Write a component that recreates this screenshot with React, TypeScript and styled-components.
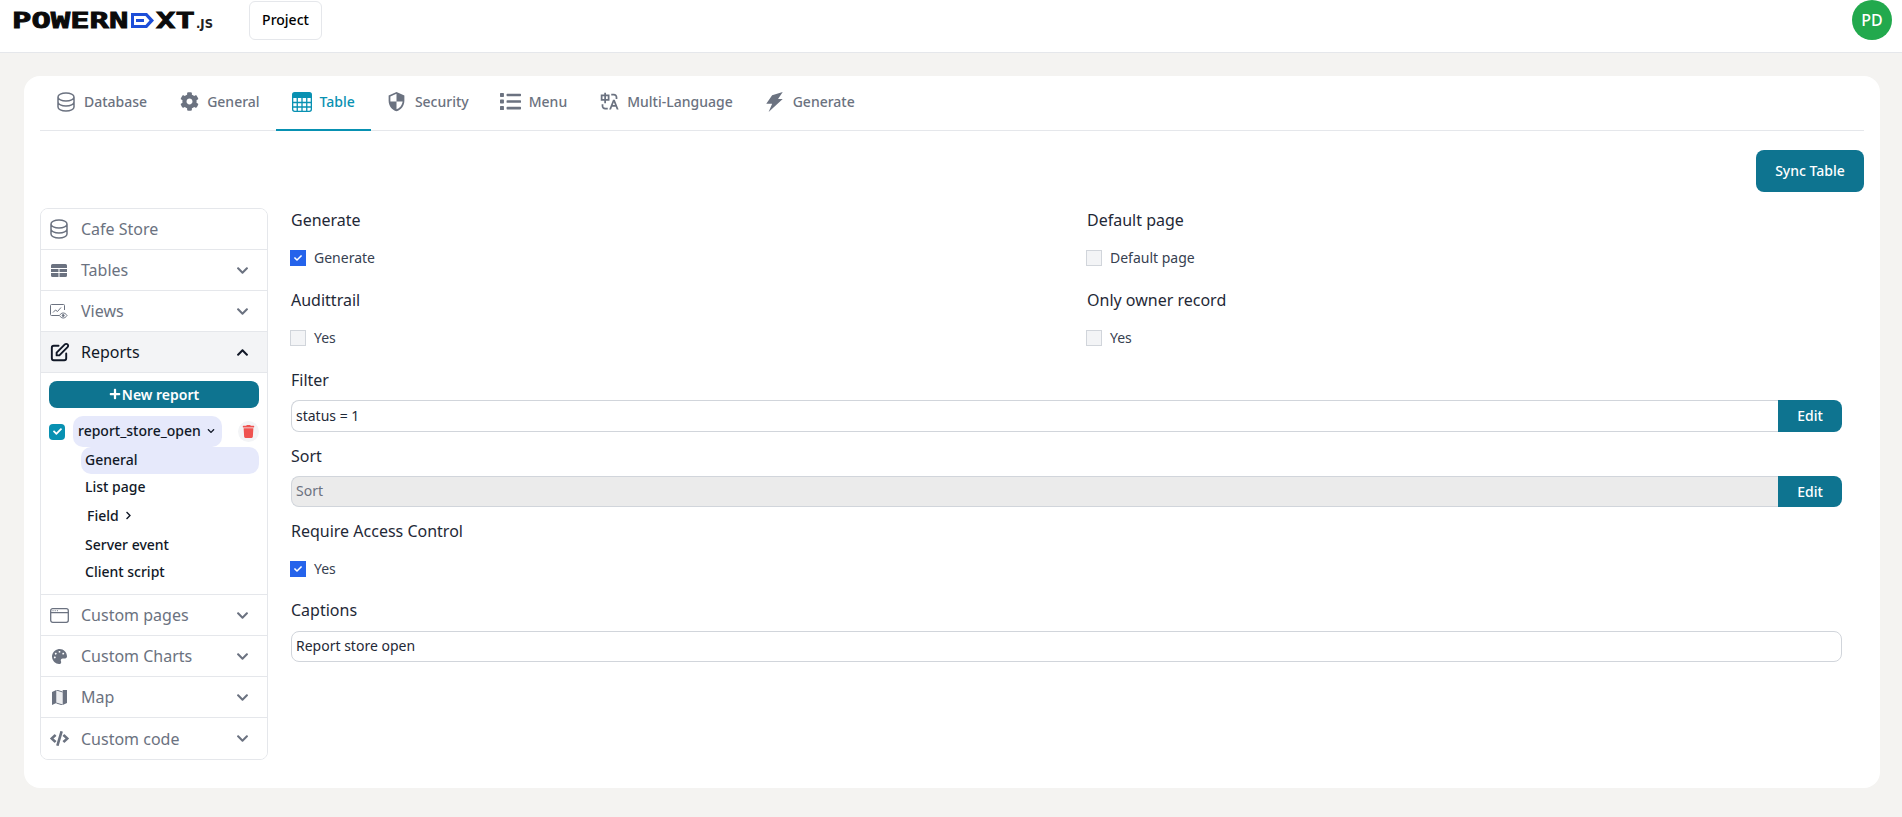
import React from 'react'
import styled, { createGlobalStyle } from 'styled-components'
import {
  FaCheck,
  FaChevronDown,
  FaChevronRight,
  FaChevronUp,
  FaCode,
  FaCog,
  FaList,
  FaPalette,
  FaPlus,
  FaTrash,
} from 'react-icons/fa'
import { HiOutlineDatabase, HiOutlinePencilAlt } from 'react-icons/hi'
import { MdSecurity } from 'react-icons/md'
import { RiTranslate } from 'react-icons/ri'

const GlobalStyle = createGlobalStyle`
  * { box-sizing: border-box; }
  html, body { margin: 0; padding: 0; }
  body {
    background: #f4f3f1;
    font-family: "Noto Sans", "Open Sans", sans-serif;
    color: #111827;
    min-height: 817px;
    overflow: hidden;
  }
`

// Header
const Header = styled.header`
  height: 53px;
  background: #fff;
  border-bottom: 1px solid #e5e7eb;
  display: flex;
  align-items: flex-start;
  padding: 1px 10px 0 12px;
`
const Logo = styled.div`
  width: 237px;
  height: 39px;
  display: flex;
  align-items: center;
  color: #0b0b0b;
  font-family: "DejaVu Sans Mono", monospace;
  font-weight: 700;
  font-size: 20.5px;
`
const LogoWord = styled.span<{ $width: number }>`
  display: inline-block;
  width: ${(p) => p.$width}px;
  transform: scaleX(1.57);
  transform-origin: left center;
  -webkit-text-stroke: 0.8px #0b0b0b;
`
const LogoSmall = styled.span`
  font-family: "DejaVu Sans", sans-serif;
  font-size: 11.5px;
  margin: 7px 0 0 1px;
  color: #222;
`
const ProjectButton = styled.button`
  width: 73px;
  height: 39px;
  padding: 0 0 2px;
  background: #fff;
  border: 1px solid #e5e7eb;
  border-radius: 6px;
  font: 500 14px "Noto Sans", sans-serif;
  color: #000;
`
const Avatar = styled.div`
  margin: -1px 0 0 auto;
  width: 40px;
  height: 40px;
  border-radius: 50%;
  background: #22a94d;
  color: #fff;
  font-size: 16px;
  font-weight: 500;
  display: flex;
  align-items: center;
  justify-content: center;
`

// Card and tabs
const Card = styled.main`
  margin: 23px 22px 0 24px;
  height: 712px;
  background: #fff;
  border-radius: 16px;
  padding: 0 16px;
`
const Tabs = styled.nav`
  height: 55px;
  display: flex;
  border-bottom: 1px solid #e5e7eb;
`
const Tab = styled.div<{ $active?: boolean }>`
  height: 55px;
  padding: 0 16px 2px;
  display: flex;
  align-items: center;
  gap: 8px;
  font-size: 14px;
  font-weight: 500;
  color: ${(p) => (p.$active ? '#0891b2' : '#6b7280')};
  border-bottom: 2px solid ${(p) => (p.$active ? '#0891b2' : 'transparent')};
`
const TabIcon = styled.span`
  width: 20px;
  height: 20px;
  display: flex;
  align-items: center;
  justify-content: center;
  & > svg {
    flex: none;
  }
`
const Toolbar = styled.div`
  display: flex;
  justify-content: flex-end;
  padding-top: 19px;
  height: 77px;
`
const SyncButton = styled.button`
  width: 108px;
  height: 42px;
  padding: 0 0 2px;
  border: 0;
  border-radius: 8px;
  background: #0e7490;
  color: #fff;
  font: 500 14px "Noto Sans", sans-serif;
`
const Body = styled.div`
  display: flex;
  align-items: flex-start;
  gap: 23px;
  padding-right: 22px;
`

// Sidebar
const Sidebar = styled.aside`
  width: 228px;
  flex: none;
  border: 1px solid #e5e7eb;
  border-radius: 8px;
  overflow: hidden;
`
const SideRow = styled.div<{ $open?: boolean; $last?: boolean }>`
  height: 41px;
  display: flex;
  align-items: center;
  padding: 0 18px 0 8px;
  font-size: 16px;
  color: ${(p) => (p.$open ? '#111827' : '#6b7280')};
  background: ${(p) => (p.$open ? '#f3f4f6' : '#fff')};
  border-bottom: ${(p) => (p.$last ? '0' : '1px solid #e5e7eb')};
`
const SideIcon = styled.span`
  width: 20px;
  height: 20px;
  display: flex;
  align-items: center;
  justify-content: center;
  margin-right: 12px;
  & > svg {
    flex: none;
  }
`
const SideLabel = styled.span`
  flex: 1;
`
const SidePanel = styled.div`
  height: 222px;
  padding: 8px 8px 0;
  border-bottom: 1px solid #e5e7eb;
`
const NewButton = styled.button`
  width: 100%;
  height: 27px;
  padding: 0 0 1px;
  border: 0;
  border-radius: 8px;
  background: #0e7490;
  color: #fff;
  font: 600 14px "Noto Sans", sans-serif;
  display: flex;
  align-items: center;
  justify-content: center;
  gap: 1px;
`
const ReportRow = styled.div`
  margin-top: 8px;
  height: 31px;
  display: flex;
  align-items: center;
`
const TealCheck = styled.span`
  width: 16px;
  height: 16px;
  border-radius: 4px;
  background: #0891b2;
  color: #fff;
  display: flex;
  align-items: center;
  justify-content: center;
  margin-right: 8px;
`
const ReportPill = styled.div`
  width: 149px;
  height: 31px;
  padding: 0 0 2px 5px;
  border-radius: 10px;
  background: #e6e9fb;
  display: flex;
  align-items: center;
  gap: 6px;
  font-size: 14px;
  font-weight: 500;
`
const TrashButton = styled.span`
  margin-left: auto;
  width: 21px;
  height: 21px;
  border-radius: 50%;
  background: #f3f4f6;
  color: #ef5350;
  display: flex;
  align-items: center;
  justify-content: center;
`
const SubItem = styled.div<{ $active?: boolean; $height: number; $indent?: number }>`
  margin-left: 32px;
  height: ${(p) => p.$height}px;
  padding: 0 0 2px ${(p) => p.$indent ?? 4}px;
  display: flex;
  align-items: center;
  gap: 5px;
  font-size: 14px;
  font-weight: 500;
  border-radius: 10px;
  background: ${(p) => (p.$active ? '#e6e9fb' : 'transparent')};
`

// Form
const Form = styled.section`
  flex: 1;
  min-width: 0;
`
const TwoCols = styled.div`
  display: grid;
  grid-template-columns: 796px 1fr;
  row-gap: 1px;
  margin-bottom: 1px;
`
const Label = styled.div<{ $top?: number }>`
  height: 24px;
  line-height: 24px;
  margin-top: ${(p) => p.$top ?? 0}px;
  font-size: 16px;
  color: #1f2937;
`
const CheckRow = styled.label`
  height: 24px;
  margin: 14px 0 17px;
  padding-bottom: 1px;
  display: flex;
  align-items: center;
  gap: 8px;
  font-size: 14px;
  color: #374151;
`
const Box = styled.span<{ $checked?: boolean }>`
  width: 16px;
  height: 16px;
  flex: none;
  margin-left: -1px;
  background: ${(p) => (p.$checked ? '#2563eb' : '#f3f4f6')};
  border: 1px solid ${(p) => (p.$checked ? '#2563eb' : '#d1d5db')};
  color: #fff;
  display: flex;
  align-items: center;
  justify-content: center;
`
const InputRow = styled.div<{ $height: number; $top?: number }>`
  margin: ${(p) => p.$top ?? 8}px 0 12px;
  display: flex;
  height: ${(p) => p.$height}px;
`
const TextInput = styled.input<{ $full?: boolean }>`
  flex: 1;
  min-width: 0;
  height: 100%;
  border: 1px solid #d1d5db;
  border-right: ${(p) => (p.$full ? '1px solid #d1d5db' : '0')};
  border-radius: ${(p) => (p.$full ? '8px' : '8px 0 0 8px')};
  padding: 0 4px 2px;
  font: 400 14px "Noto Sans", sans-serif;
  color: #1f2937;
  background: #fff;
  &:disabled {
    background: #ebebeb;
  }
  &::placeholder {
    color: #6b7280;
  }
`
const EditButton = styled.button`
  width: 64px;
  height: 100%;
  padding: 0 0 1px;
  border: 0;
  border-radius: 0 8px 8px 0;
  background: #0e7490;
  color: #fff;
  font: 500 14px "Noto Sans", sans-serif;
`

// Icons that the packages don't have
const TableGridIcon = () => (
  <svg width="20" height="20" viewBox="0 0 20 20" fill="none" stroke="currentColor" strokeWidth="1.300">
    <rect x="0.650" y="0.650" width="18.700" height="18.700" rx="2" />
    <path d="M1 3.500h18" strokeWidth="5" />
    <path d="M5.250 6v13M10 6v13M14.750 6v13M1 10.500h18M1 15h18" />
  </svg>
)
const BoltIcon = () => (
  <svg width="17" height="20" viewBox="0 0 14 17" fill="currentColor">
    <path d="M5 2.700L14 0l-4 6h4L2 17l3-7H0z" />
  </svg>
)
const TablesIcon = () => (
  <svg width="16" height="13" viewBox="0 0 16 13" fill="currentColor">
    <path d="M1.500 0h13A1.500 1.500 0 0 1 16 1.500V4H0V1.500A1.500 1.500 0 0 1 1.500 0zM0 5h7.500v3H0zM8.500 5H16v3H8.500zM0 9h7.500v4H1.500A1.500 1.500 0 0 1 0 11.500zM8.500 9H16v2.500a1.500 1.500 0 0 1-1.500 1.500h-6z" />
  </svg>
)
const ViewsIcon = () => (
  <svg width="18" height="15" viewBox="0 0 18 15" fill="none" stroke="currentColor" strokeWidth="1">
    <path d="M9 11.500H1.500a1 1 0 0 1-1-1v-9a1 1 0 0 1 1-1h12a1 1 0 0 1 1 1V6" />
    <path d="M3 8.500l2.500-2.500 2 1.500L11 3.500" />
    <path d="M9.500 11.500c1-1.700 2.300-2.500 3.700-2.500s2.800.8 3.800 2.500c-1 1.700-2.400 2.500-3.800 2.500s-2.700-.8-3.700-2.500z" />
    <circle cx="13.200" cy="11.500" r="1" fill="currentColor" />
  </svg>
)
const WindowIcon = () => (
  <svg width="19" height="15" viewBox="0 0 19 15" fill="none" stroke="currentColor" strokeWidth="1.300">
    <rect x="0.700" y="0.700" width="17.600" height="13.600" rx="2" />
    <path d="M0.700 4.700h17.600" />
    <path d="M2.500 2.700h1M4.700 2.700h1M6.900 2.700h1" strokeWidth="1" />
  </svg>
)
const MapIcon = () => (
  <svg width="15" height="15" viewBox="0 0 15 15" fill="currentColor">
    <path d="M0 2l4.300-2v13L0 15zM10.700 0L15 0v13l-4.300 2z" />
    <path d="M4.300 0l6.400 2v13l-6.400-2z" fillOpacity="0.12" />
    <path d="M4.300 0l6.400 2M4.300 13l6.400 2" stroke="currentColor" strokeWidth="1" />
  </svg>
)
const LogoArrow = () => (
  <svg width="25" height="15" viewBox="0 0 25 15" fill="#1d4ed8">
    <path d="M0 0h16l7 7.500-7 7.500H0zM3 3v9h11.500l4-4.500-4-4.500z" fillRule="evenodd" />
    <rect x="5" y="6" width="8" height="3" />
  </svg>
)

const tabs = [
  { label: 'Database', icon: <HiOutlineDatabase size={24} strokeWidth={1.5} /> },
  { label: 'General', icon: <FaCog size={19} /> },
  { label: 'Table', icon: <TableGridIcon />, active: true },
  { label: 'Security', icon: <MdSecurity size={21} /> },
  { label: 'Menu', icon: <FaList size={21} /> },
  { label: 'Multi-Language', icon: <RiTranslate size={21} /> },
  { label: 'Generate', icon: <BoltIcon /> },
]

const subItems = [
  { label: 'List page', height: 26 },
  { label: 'Field', height: 32, indent: 6, more: true },
  { label: 'Server event', height: 27 },
  { label: 'Client script', height: 27 },
]

const Chevron = () => <FaChevronDown size={13} />

export default function App() {
  return (
    <>
      <GlobalStyle />
      <Header>
        <Logo>
          <LogoWord $width={119}>POWERN</LogoWord>
          <LogoArrow />
          <LogoWord $width={39}>XT</LogoWord>
          <LogoSmall>.JS</LogoSmall>
        </Logo>
        <ProjectButton>Project</ProjectButton>
        <Avatar>PD</Avatar>
      </Header>
      <Card>
        <Tabs>
          {tabs.map((t) => (
            <Tab key={t.label} $active={t.active}>
              <TabIcon>{t.icon}</TabIcon>
              {t.label}
            </Tab>
          ))}
        </Tabs>
        <Toolbar>
          <SyncButton>Sync Table</SyncButton>
        </Toolbar>
        <Body>
          <Sidebar>
            <SideRow>
              <SideIcon><HiOutlineDatabase size={24} strokeWidth={1.5} /></SideIcon>
              <SideLabel>Cafe Store</SideLabel>
            </SideRow>
            <SideRow>
              <SideIcon><TablesIcon /></SideIcon>
              <SideLabel>Tables</SideLabel>
              <Chevron />
            </SideRow>
            <SideRow>
              <SideIcon><ViewsIcon /></SideIcon>
              <SideLabel>Views</SideLabel>
              <Chevron />
            </SideRow>
            <SideRow $open>
              <SideIcon><HiOutlinePencilAlt size={23} /></SideIcon>
              <SideLabel>Reports</SideLabel>
              <FaChevronUp size={13} />
            </SideRow>
            <SidePanel>
              <NewButton><FaPlus size={12} />New report</NewButton>
              <ReportRow>
                <TealCheck><FaCheck size={9} /></TealCheck>
                <ReportPill>
                  report_store_open
                  <FaChevronDown size={8} />
                </ReportPill>
                <TrashButton><FaTrash size={13} /></TrashButton>
              </ReportRow>
              <SubItem $active $height={27}>General</SubItem>
              {subItems.map((s) => (
                <SubItem key={s.label} $height={s.height} $indent={s.indent}>
                  {s.label}
                  {s.more && <FaChevronRight size={9} />}
                </SubItem>
              ))}
            </SidePanel>
            <SideRow>
              <SideIcon><WindowIcon /></SideIcon>
              <SideLabel>Custom pages</SideLabel>
              <Chevron />
            </SideRow>
            <SideRow>
              <SideIcon><FaPalette size={15} /></SideIcon>
              <SideLabel>Custom Charts</SideLabel>
              <Chevron />
            </SideRow>
            <SideRow>
              <SideIcon><MapIcon /></SideIcon>
              <SideLabel>Map</SideLabel>
              <Chevron />
            </SideRow>
            <SideRow $last>
              <SideIcon><FaCode size={19} /></SideIcon>
              <SideLabel>Custom code</SideLabel>
              <Chevron />
            </SideRow>
          </Sidebar>
          <Form>
            <TwoCols>
              <div>
                <Label>Generate</Label>
                <CheckRow><Box $checked><FaCheck size={8} /></Box>Generate</CheckRow>
              </div>
              <div>
                <Label>Default page</Label>
                <CheckRow><Box />Default page</CheckRow>
              </div>
              <div>
                <Label>Audittrail</Label>
                <CheckRow><Box />Yes</CheckRow>
              </div>
              <div>
                <Label>Only owner record</Label>
                <CheckRow><Box />Yes</CheckRow>
              </div>
            </TwoCols>
            <Label>Filter</Label>
            <InputRow $height={32}>
              <TextInput defaultValue="status = 1" />
              <EditButton>Edit</EditButton>
            </InputRow>
            <Label>Sort</Label>
            <InputRow $height={31}>
              <TextInput placeholder="Sort" disabled />
              <EditButton>Edit</EditButton>
            </InputRow>
            <Label>Require Access Control</Label>
            <CheckRow><Box $checked><FaCheck size={8} /></Box>Yes</CheckRow>
            <Label $top={1}>Captions</Label>
            <InputRow $height={31} $top={9}>
              <TextInput $full defaultValue="Report store open" />
            </InputRow>
          </Form>
        </Body>
      </Card>
    </>
  )
}
